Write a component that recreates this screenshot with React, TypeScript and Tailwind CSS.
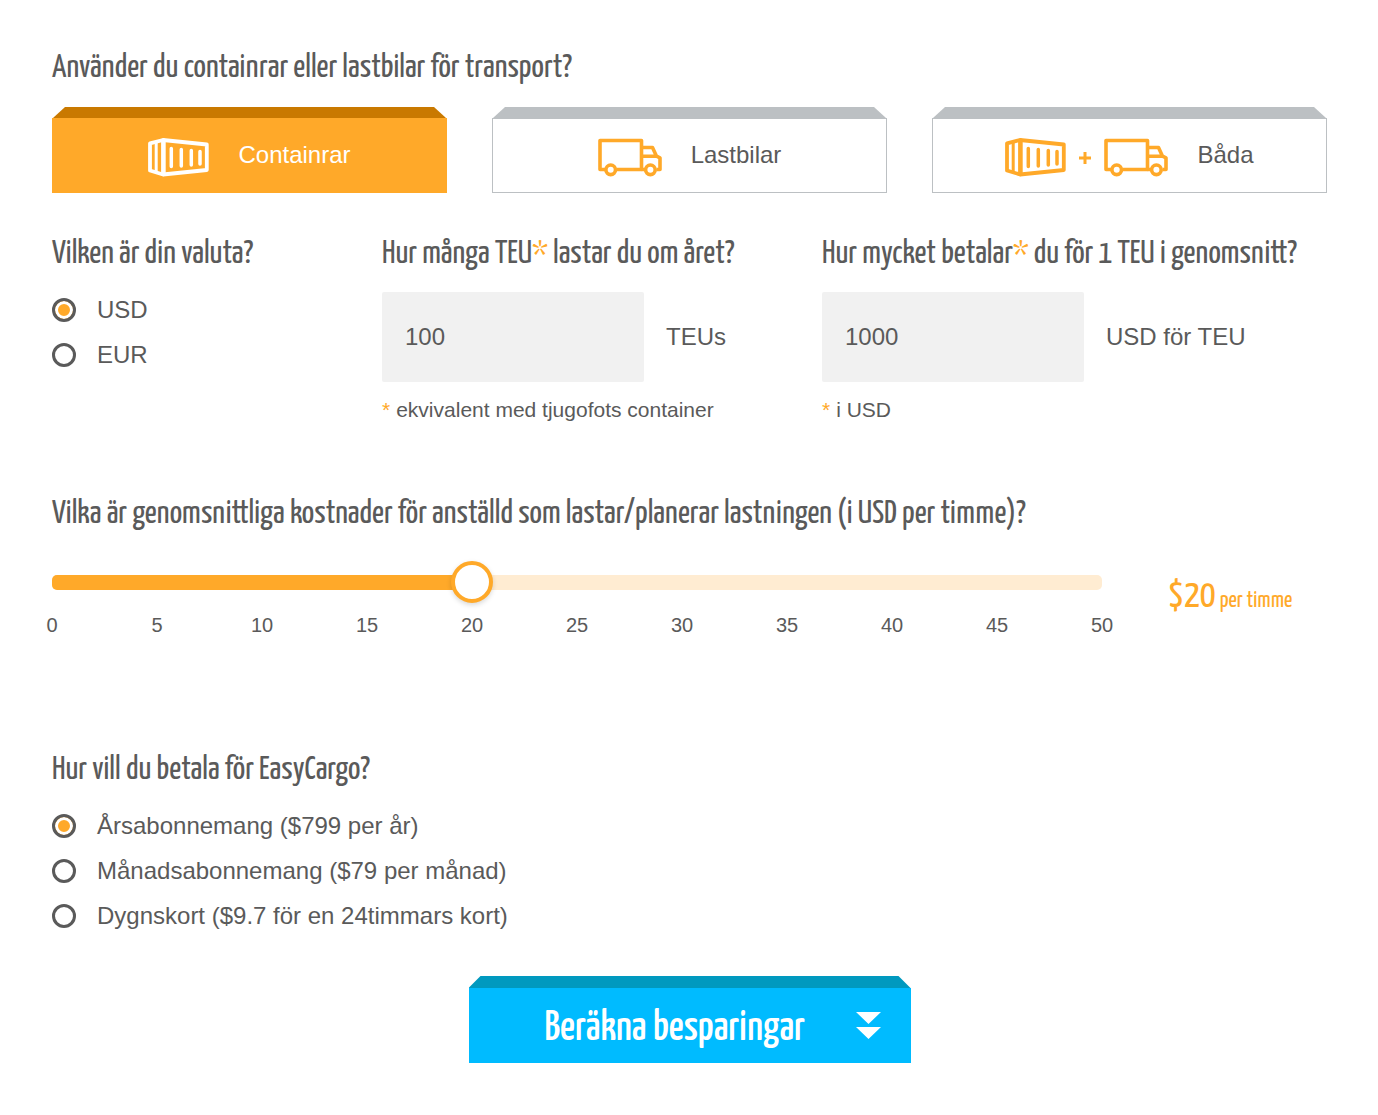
import React, { useState } from 'react';

const condensed = "font-['Yanone_Kaffeesatz','Liberation_Sans_Narrow','Roboto_Condensed','Open_Sans_Condensed',sans-serif]";

const ContainerIcon = () => (
  <svg className="w-[61px] h-[39px]" viewBox="0 0 61 39" fill="none" stroke="currentColor" strokeWidth="3.8" strokeLinejoin="round" strokeLinecap="round" aria-hidden="true">
    <path d="M2 5.4 L15 2 L58.8 6.5 V32 L15 36.5 L2 32.5 Z" />
    <path d="M15.4 2.5 V36" strokeWidth="4.6" />
    <path d="M8.2 5.5 V33" strokeWidth="3" />
    <path d="M23.3 10.5 V28.5 M33.3 11.5 V28 M43.3 12.5 V27 M52 13.5 V26" strokeWidth="3.5" />
  </svg>
);

const TruckIcon = () => (
  <svg className="w-16 h-[39px]" viewBox="0 0 64 39" fill="none" stroke="currentColor" strokeWidth="3.6" strokeLinejoin="round" aria-hidden="true">
    <path d="M7 31.5 H2 V2.5 H43.5 V31.5 H18.5" />
    <path d="M43.5 9.5 H54.5 L58.5 18.2 L62 19.8 V31.5 H58.5 M47 31.5 H43.5 M43.5 18.2 H58.5" />
    <circle cx="12.7" cy="31.8" r="4.8" />
    <circle cx="52.4" cy="31.8" r="4.8" />
  </svg>
);

const PlusIcon = () => (
  <svg className="w-3 h-3 mx-[13px]" viewBox="0 0 12 12" stroke="currentColor" strokeWidth="3" aria-hidden="true">
    <path d="M6 0 V12 M0 6 H12" />
  </svg>
);

const transports = [
  { id: 'containers', label: 'Containrar', icon: <ContainerIcon /> },
  { id: 'trucks', label: 'Lastbilar', icon: <TruckIcon /> },
  { id: 'both', label: 'Båda', icon: <><ContainerIcon /><PlusIcon /><TruckIcon /></> },
];

const plans = [
  { id: 'year', label: 'Årsabonnemang ($799 per år)' },
  { id: 'month', label: 'Månadsabonnemang ($79 per månad)' },
  { id: 'day', label: 'Dygnskort ($9.7 för en 24timmars kort)' },
];

const ticks = [0, 5, 10, 15, 20, 25, 30, 35, 40, 45, 50];

const Star = () => <span className="text-[#ffa929]">*</span>;

const Heading = ({ children }: { children: React.ReactNode }) => (
  <h2 className={`${condensed} pt-1 text-[33px] leading-9 whitespace-nowrap`}>{children}</h2>
);

type RadioProps = {
  name: string;
  label: string;
  checked: boolean;
  onChange: () => void;
};

const Radio = ({ name, label, checked, onChange }: RadioProps) => (
  <label className="flex items-center h-[45px] gap-[21px] cursor-pointer">
    <input
      type="radio"
      name={name}
      checked={checked}
      onChange={onChange}
      className="appearance-none w-6 h-6 shrink-0 rounded-full border-3 border-[#5a5a5a] bg-white checked:bg-[#ffa929] checked:shadow-[inset_0_0_0_3px_#fff]"
    />
    {label}
  </label>
);

type AmountProps = {
  id: string;
  value: string;
  unit: string;
  note: string;
  onChange: (value: string) => void;
};

const Amount = ({ id, value, unit, note, onChange }: AmountProps) => (
  <>
    <div className="flex items-center gap-[22px] mt-[19px]">
      <input
        id={id}
        type="text"
        value={value}
        onChange={(e) => onChange(e.target.value)}
        className="w-[262px] h-[90px] px-[23px] rounded-xs bg-[#f1f1f1] outline-none"
      />
      <span>{unit}</span>
    </div>
    <p className="mt-3.5 text-[21px] leading-7"><span className="mr-1.5"><Star /></span>{note}</p>
  </>
);

export default function App() {
  const [transport, setTransport] = useState('containers');
  const [currency, setCurrency] = useState('USD');
  const [teu, setTeu] = useState('100');
  const [price, setPrice] = useState('1000');
  const [cost, setCost] = useState(20);
  const [plan, setPlan] = useState('year');

  return (
    <form className="bg-white pl-[52px] pr-[51px] pt-[47px] pb-[52px] font-['Liberation_Sans',Arial,sans-serif] text-2xl text-[#5a5a5a]">
      <Heading>Använder du containrar eller lastbilar för transport?</Heading>
      <div className="grid grid-cols-3 gap-[45px] mt-5">
        {transports.map(({ id, label, icon }) => {
          const active = transport === id;
          return (
            <button key={id} type="button" aria-pressed={active} onClick={() => setTransport(id)} className="block cursor-pointer">
              <span className={`block h-[11px] mx-px [clip-path:polygon(12px_0,calc(100%_-_12px)_0,100%_100%,0_100%)] ${active ? 'bg-[#c97900]' : 'bg-[#bcc0c3]'}`} />
              <span className={`flex items-center justify-center h-[75px] pb-0.5 border ${active ? 'bg-[#ffa929] border-[#ffa929] text-white' : 'bg-white border-[#bcc0c3]'}`}>
                <span className={`flex items-center mr-[29px] mt-1.5 ${active ? 'text-white' : 'text-[#ffa929]'}`}>{icon}</span>
                {label}
              </span>
            </button>
          );
        })}
      </div>

      <div className="grid grid-cols-[285fr_395fr_505fr] gap-[45px] mt-10">
        <div>
          <Heading>Vilken är din valuta?</Heading>
          <div className="mt-3.5">
            {['USD', 'EUR'].map((item) => (
              <Radio key={item} name="currency" label={item} checked={currency === item} onChange={() => setCurrency(item)} />
            ))}
          </div>
        </div>
        <div>
          <Heading><label htmlFor="teu">Hur många TEU<Star /> lastar du om året?</label></Heading>
          <Amount id="teu" value={teu} unit="TEUs" note="ekvivalent med tjugofots container" onChange={setTeu} />
        </div>
        <div>
          <Heading><label htmlFor="price">Hur mycket betalar<Star /> du för 1 TEU i genomsnitt?</label></Heading>
          <Amount id="price" value={price} unit={`${currency} för TEU`} note={`i ${currency}`} onChange={setPrice} />
        </div>
      </div>

      <div className="mt-[69px]">
        <Heading><label htmlFor="cost">Vilka är genomsnittliga kostnader för anställd som lastar/planerar lastningen (i {currency} per timme)?</label></Heading>
      </div>
      <div className="flex mt-7">
        <div className="flex-1">
          <div className="grid items-center h-[42px]">
            <div className="[grid-area:1/1] h-[15px] rounded-[5px] overflow-hidden bg-[#ffecd2]">
              <div className="h-full bg-[#ffa929]" style={{ width: `${cost * 2}%` }} />
            </div>
            <input
              id="cost"
              type="range"
              min={0}
              max={50}
              value={cost}
              onChange={(e) => setCost(Number(e.target.value))}
              className="[grid-area:1/1] appearance-none bg-transparent h-[42px] -mx-[21px] outline-none cursor-pointer [&::-webkit-slider-thumb]:appearance-none [&::-webkit-slider-thumb]:w-[42px] [&::-webkit-slider-thumb]:h-[42px] [&::-webkit-slider-thumb]:rounded-full [&::-webkit-slider-thumb]:border-4 [&::-webkit-slider-thumb]:border-solid [&::-webkit-slider-thumb]:border-[#ffa929] [&::-webkit-slider-thumb]:bg-white [&::-webkit-slider-thumb]:shadow-[0_2px_5px_rgba(0,0,0,0.15)]"
            />
          </div>
          <div className="flex justify-between mt-2.5 text-xl leading-6">
            {ticks.map((tick) => (
              <span key={tick} className="flex justify-center w-0">{tick}</span>
            ))}
          </div>
        </div>
        <output htmlFor="cost" className={`${condensed} w-[159px] ml-[66px] mt-3 leading-12 whitespace-nowrap text-[#ffa929]`}>
          <span className="text-[38px]">${cost}</span>
          <span className="text-[23px] ml-1">per timme</span>
        </output>
      </div>

      <div className="mt-28">
        <Heading>Hur vill du betala för EasyCargo?</Heading>
        <div className="mt-3.5">
          {plans.map(({ id, label }) => (
            <Radio key={id} name="plan" label={label} checked={plan === id} onChange={() => setPlan(id)} />
          ))}
        </div>
      </div>

      <button type="submit" onClick={(e) => e.preventDefault()} className="block w-[442px] mx-auto mt-[38px] text-white cursor-pointer">
        <span className="block h-3 bg-[#0099bf] [clip-path:polygon(12px_0,calc(100%_-_12px)_0,100%_100%,0_100%)]" />
        <span className="flex items-center justify-between h-[75px] pl-[76px] pr-[30px] bg-[#00bbff]">
          <span className={`${condensed} pt-1.5 text-[42px] leading-12 font-medium`}>Beräkna besparingar</span>
          <svg className="w-[25px] h-[27px]" viewBox="0 0 25 27" fill="currentColor" aria-hidden="true">
            <path d="M0 0 H25 L12.5 12 Z M0 15 H25 L12.5 27 Z" />
          </svg>
        </span>
      </button>
    </form>
  );
}
